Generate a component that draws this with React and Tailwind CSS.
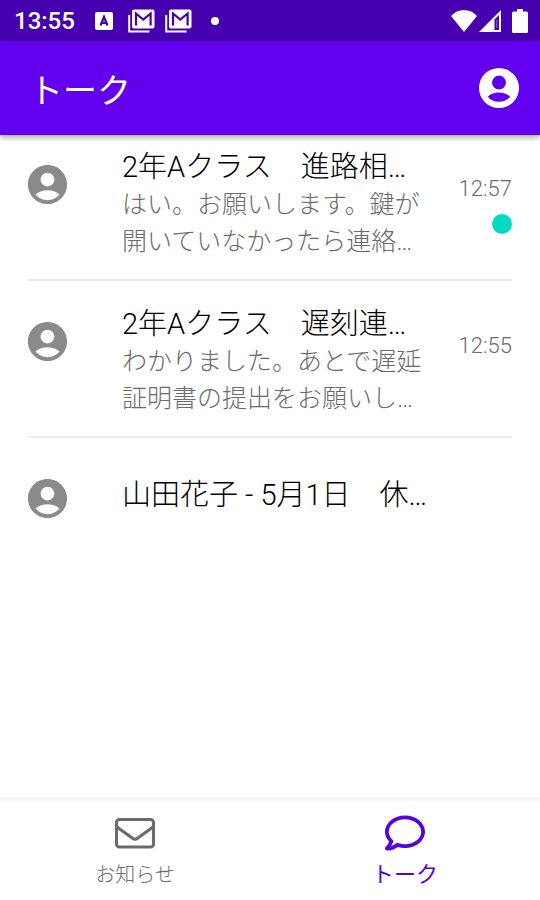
import { FaRegComment } from "react-icons/fa";
import { MdAccountCircle } from "react-icons/md";

const talks = [
  {
    id: 1,
    title: "2年Aクラス　進路相…",
    preview: ["はい。お願いします。鍵が", "開いていなかったら連絡…"],
    time: "12:57",
    unread: true,
  },
  {
    id: 2,
    title: "2年Aクラス　遅刻連…",
    preview: ["わかりました。あとで遅延", "証明書の提出をお願いし…"],
    time: "12:55",
  },
  { id: 3, title: "山田花子 - 5月1日　休…" },
];

function MailStackIcon() {
  return (
    <svg className="h-6 w-[27px]" viewBox="0 0 27 24" fill="none" aria-hidden="true">
      <path d="M1.2 6v16.500H21.500" stroke="#fff" strokeWidth="2" />
      <rect x="4" y="0.500" width="22.500" height="19" rx="2" fill="#fff" />
      <path d="M8 16.500V4.500l7.300 6 7.300-6v12" stroke="#4600b0" strokeWidth="2.200" />
    </svg>
  );
}

function EnvelopeIcon() {
  return (
    <svg className="h-10 w-10" viewBox="0 0 40 40" fill="none" stroke="currentColor" strokeWidth="3" strokeLinejoin="round" aria-hidden="true">
      <rect x="1.500" y="6.500" width="37" height="27.500" rx="3" />
      <path d="m2 14 15.500 11.300q2.500 1.800 5 0L38 14" />
    </svg>
  );
}

function StatusBar() {
  return (
    <div className="flex h-[41px] items-center bg-[#4600b0] pr-3 pl-[14px] text-white">
      <span className="w-20 text-2xl font-medium">13:55</span>
      <svg className="mr-[15px] ml-px h-[18px] w-[18px]" viewBox="0 0 18 18" aria-hidden="true">
        <rect width="18" height="18" rx="2" fill="#fff" />
        <path d="M5.500 13.500 9 5l3.500 8.500M6.700 10.800h4.600" fill="none" stroke="#4600b0" strokeWidth="2.200" />
      </svg>
      <div className="flex gap-[10px]">
        <MailStackIcon />
        <MailStackIcon />
      </div>
      <span className="ml-[19px] h-2 w-2 rounded-full bg-white" />
      <div className="ml-auto flex items-center">
        <svg className="h-[22px] w-[26px]" viewBox="0 0 26 22" fill="#fff" aria-hidden="true">
          <path d="M13 22 0 6C3.400 2 8 0 13 0s9.600 2 13 6z" />
        </svg>
        <svg className="mr-[11px] ml-[2px] h-[22px] w-[22px]" viewBox="0 0 22 22" aria-hidden="true">
          <path d="M22 0v22H0z" fill="#fff" />
          <path d="M15.500 9.500 20 5v15h-4.500z" fill="#4600b0" />
          <path d="M17.800 9.500v8.500" stroke="#8f66d0" />
        </svg>
        <svg className="h-6 w-4" viewBox="0 0 16 24" fill="#fff" aria-hidden="true">
          <path d="M5 0h6v2.500h3.500A1.500 1.500 0 0 1 16 4v18.500a1.500 1.500 0 0 1-1.500 1.500h-13A1.500 1.500 0 0 1 0 22.500V4a1.500 1.500 0 0 1 1.500-1.500H5z" />
        </svg>
      </div>
    </div>
  );
}

function AppBar() {
  return (
    <header className="relative flex h-[94px] items-center justify-between bg-[#6200ee] pr-[21px] pl-[29px] text-white shadow-[0_2px_6px_rgba(0,0,0,0.4)]">
      <h1 className="pt-[6px] text-[34px] leading-10">トーク</h1>
      <button type="button" aria-label="アカウント">
        <svg className="h-10 w-10" viewBox="2 2 20 20" fill="currentColor" aria-hidden="true">
          <path
            fillRule="evenodd"
            d="M12 2a10 10 0 1 0 0 20 10 10 0 0 0 0-20zm0 3.800a3.500 3.500 0 1 1 0 7 3.500 3.500 0 0 1 0-7zm0 13.100c-2.300 0-4.300-.9-5.600-2.500 1-1.300 3.200-2.200 5.600-2.200s4.600.9 5.600 2.200c-1.300 1.600-3.300 2.500-5.600 2.500z"
          />
        </svg>
      </button>
    </header>
  );
}

function TalkRow({ talk }) {
  // Rows without a preview sit a little lower so the title lines up with the avatar.
  return (
    <li className="-mt-px border-b-2 border-[#ededed] last:border-b-0">
      <a href="#talk" className="flex min-h-[156px] items-start">
        <MdAccountCircle className="mt-[38px] -ml-1 h-[47px] w-[47px] shrink-0 text-[#8a8a8a]" aria-hidden="true" />
        <div className={`ml-[51px] min-w-0 flex-1 font-light ${talk.preview ? "pt-[25px]" : "pt-[39px]"}`}>
          <h2 className="text-[29px] leading-[38px] whitespace-nowrap text-black">{talk.title}</h2>
          {talk.preview && (
            <p className="text-[25px] leading-[37px] whitespace-nowrap text-[#6b6b6b]">
              {talk.preview.map((line) => (
                <span key={line} className="block">
                  {line}
                </span>
              ))}
            </p>
          )}
        </div>
        <div className="flex flex-col items-end pt-[51px]">
          {talk.time && <time className="text-[22px] leading-[30px] font-light text-[#6b6b6b]">{talk.time}</time>}
          {talk.unread && <span className="mt-[10px] h-5 w-5 rounded-full bg-[#03dac5]" />}
        </div>
      </a>
    </li>
  );
}

export default function App() {
  return (
    <div className="flex min-h-screen flex-col bg-white font-[Roboto,'Noto_Sans_CJK_JP',sans-serif]">
      <StatusBar />
      <AppBar />
      <main className="flex-1 overflow-hidden px-7">
        <ul className="-mt-3">
          {talks.map((talk) => (
            <TalkRow key={talk.id} talk={talk} />
          ))}
        </ul>
      </main>
      <nav className="grid h-[103px] grid-cols-2 border-t-4 border-[#f8f8f8] text-center">
        <a href="#news" className="flex flex-col items-center pt-3 text-[#6b6b6b]">
          <EnvelopeIcon />
          <span className="mt-[6px] text-xl leading-8 font-light">お知らせ</span>
        </a>
        <a href="#talk" aria-current="page" className="flex flex-col items-center pt-3 text-[#5600e0]">
          <FaRegComment className="h-10 w-10" aria-hidden="true" />
          <span className="mt-[6px] text-[22px] leading-8">トーク</span>
        </a>
      </nav>
    </div>
  );
}
